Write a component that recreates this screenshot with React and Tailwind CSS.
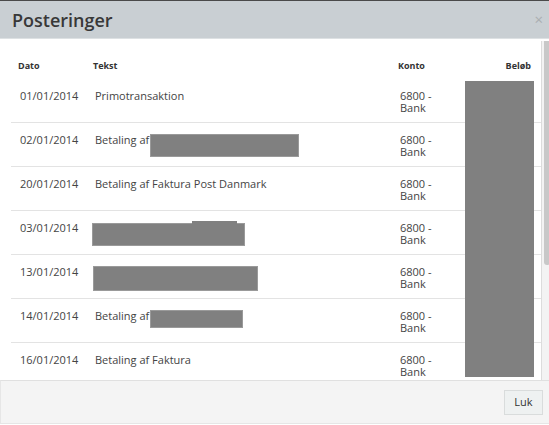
import React from "react";

const rows = [
  { d: "01/01/2014", t: "Primotransaktion" },
  { d: "02/01/2014", t: "Betaling af", r: { l: 55, t: 5, w: 149, h: 23 } },
  { d: "20/01/2014", t: "Betaling af Faktura Post Danmark" },
  { d: "03/01/2014", t: "", r: { l: -3, t: 6, w: 153, h: 23 }, step: { l: 97, t: 4, w: 45, h: 3 } },
  { d: "13/01/2014", t: "", r: { l: -2, t: 5, w: 165, h: 25 } },
  { d: "14/01/2014", t: "Betaling af", r: { l: 55, t: 5, w: 93, h: 18 } },
  { d: "16/01/2014", t: "Betaling af Faktura" },
];

export default function App() {
  return (
    <div
      className="relative w-[549px] h-[425px] overflow-hidden bg-white border-t border-[#4a4a4a] flex flex-col"
      style={{ fontFamily: '"Open Sans", "Noto Sans", sans-serif' }}
    >
      <div className="h-[38px] shrink-0 bg-[#c9cfd3] border-b border-[#dde1e3] flex items-center justify-between pl-[12px] pr-[6px]">
        <span className="text-[18px] font-semibold text-[#383838] leading-none">Posteringer</span>
        <span className="text-[15px] text-[#a9aeb1] leading-none">×</span>
      </div>
      <div className="flex h-[341px] shrink-0">
        <div className="relative w-[541px] overflow-hidden">
          <div className="ml-[11px] h-[40px] pt-[21px] flex text-[9px] font-bold text-[#333] leading-[12px]">
            <div className="w-[82px] pl-[7px]">Dato</div>
            <div className="w-[305px]">Tekst</div>
            <div className="w-[67px]">Konto</div>
            <div className="w-[69px] text-right pr-[3px]">Beløb</div>
          </div>
          {rows.map((r, i) => (
            <div
              key={i}
              className="ml-[11px] h-[44px] pt-[11px] flex border-b border-[#e3e3e3] text-[11px] leading-[12px] text-[#444]"
            >
              <div className="w-[82px] pl-[9px]">{r.d}</div>
              <div className="w-[305px] pl-[2px] relative">
                {r.t}
                {r.r && (
                  <div
                    className="absolute bg-[#808080] border border-[#9a9a9a]"
                    style={{ left: r.r.l + 2, top: r.r.t - 5, width: r.r.w, height: r.r.h }}
                  />
                )}
                {r.step && (
                  <div
                    className="absolute bg-[#808080]"
                    style={{ left: r.step.l + 2, top: r.step.t - 5, width: r.step.w, height: r.step.h }}
                  />
                )}
              </div>
              <div className="w-[67px] pl-[2px] leading-[12px]">
                <div>6800 -</div>
                <div>Bank</div>
              </div>
            </div>
          ))}
          <div className="absolute left-[465px] top-[42px] w-[69px] h-[296px] bg-[#808080]" />
        </div>
        <div className="w-[8px] mt-[2px] bg-[#f3f3f3] border-l border-[#dcdcdc] relative">
          <div className="absolute left-[2px] top-0 w-[6px] h-[224px] bg-[#c8c8c8] rounded-b-[3px]" />
        </div>
      </div>
      <div className="h-[44px] shrink-0 bg-[#f4f4f4] border-t border-[#e0e0e0] border-l border-b border-l-[#e6e6e6] border-b-[#e6e6e6] flex items-center justify-end pr-[6px]">
        <div className="w-[39px] h-[25px] flex items-center justify-center bg-[#eef1f1] border border-[#d9dcdc] text-[11px] text-[#333]">
          Luk
        </div>
      </div>
    </div>
  );
}
